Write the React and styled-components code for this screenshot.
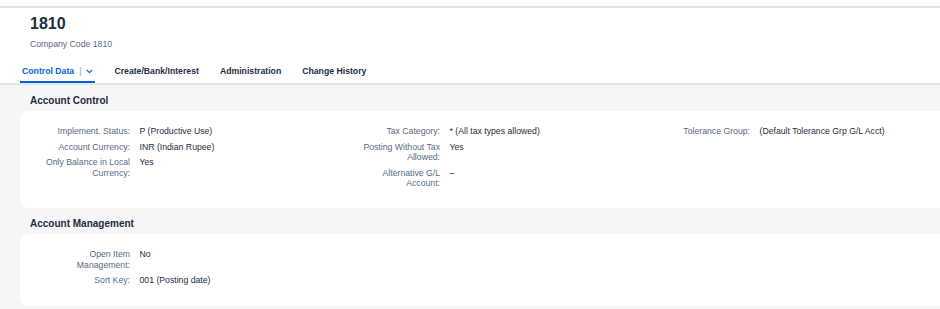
import React from 'react';
import styled, { createGlobalStyle } from 'styled-components';

const colors = {
  text: '#1d2d3e',
  label: '#556b82',
  blue: '#0064d9',
  bg: '#f5f6f7',
  line: '#e4e4e4',
};

const GlobalStyle = createGlobalStyle`
  html, body {
    margin: 0;
    padding: 0;
    background: ${colors.bg};
    overflow: hidden;
  }
  body {
    font-family: 'Liberation Sans', Arial, sans-serif;
    color: ${colors.text};
  }
`;

const Page = styled.div`
  width: 940px;
  height: 309px;
  overflow: hidden;
  background: ${colors.bg};
`;

const TopStrip = styled.div`
  height: 6px;
  background: #fff;
  border-bottom: 2px solid ${colors.line};
`;

const Header = styled.header`
  background: #fff;
  padding: 6px 0 0 30px;
  border-bottom: 2px solid ${colors.line};
`;

const Title = styled.h1`
  margin: 0;
  font-size: 16px;
  line-height: 20px;
  font-weight: 700;
`;

const Subtitle = styled.div`
  margin-top: 4px;
  font-size: 8.7px;
  line-height: 12px;
  color: ${colors.label};
`;

const Tabs = styled.nav`
  display: flex;
  gap: 17px;
  margin: 15px 0 0 -10px;
`;

const Tab = styled.div`
  display: flex;
  align-items: center;
  gap: 5px;
  padding: 0 2px 4px;
  height: 12px;
  font-size: 8.7px;
  line-height: 12px;
  font-weight: 700;
  color: ${(p) => (p.$active ? colors.blue : colors.text)};
  border-bottom: 2px solid ${(p) => (p.$active ? colors.blue : 'transparent')};
`;

const Sep = styled.span`
  font-weight: 400;
  color: #7fa9dd;
`;

const Section = styled.section`
  padding: 0 0 0 20px;
`;

const SectionTitle = styled.h2`
  margin: 0;
  padding: 10px 0 0 10px;
  height: 16px;
  font-size: 10px;
  line-height: 12px;
  font-weight: 700;
`;

const Card = styled.div`
  background: #fff;
  border-radius: 8px 0 0 8px;
  margin-right: -12px;
  padding: 15px 0 0 20px;
  height: ${(p) => p.$height}px;
  box-sizing: border-box;
  display: grid;
  grid-template-columns: repeat(3, 310px);
  align-items: start;
`;

const Column = styled.div`
  display: grid;
  grid-template-columns: 90px 1fr;
  column-gap: 9.5px;
  row-gap: 5px;
  font-size: 8.7px;
  line-height: 10.6px;
`;

const Label = styled.div`
  text-align: right;
  color: ${colors.label};
`;

const Value = styled.div`
  color: ${colors.text};
`;

const Chevron = () => (
  <svg width="7" height="5" viewBox="0 0 7 5" fill="none">
    <path d="M0.7 0.8 L3.5 3.7 L6.3 0.8" stroke={colors.blue} strokeWidth="1.1" />
  </svg>
);

const Field = ({ label, value }) => (
  <>
    <Label>{label}:</Label>
    <Value>{value}</Value>
  </>
);

const controlColumns = [
  [
    ['Implement. Status', 'P (Productive Use)'],
    ['Account Currency', 'INR (Indian Rupee)'],
    ['Only Balance in Local Currency', 'Yes'],
  ],
  [
    ['Tax Category', '* (All tax types allowed)'],
    ['Posting Without Tax Allowed', 'Yes'],
    ['Alternative G/L Account', '–'],
  ],
  [['Tolerance Group', '(Default Tolerance Grp G/L Acct)']],
];

const managementColumns = [
  [
    ['Open Item Management', 'No'],
    ['Sort Key', '001 (Posting date)'],
  ],
];

const FormCard = ({ columns, height }) => (
  <Card $height={height}>
    {columns.map((fields, i) => (
      <Column key={i}>
        {fields.map(([label, value]) => (
          <Field key={label} label={label} value={value} />
        ))}
      </Column>
    ))}
  </Card>
);

export default function App() {
  return (
    <Page>
      <GlobalStyle />
      <TopStrip />
      <Header>
        <Title>1810</Title>
        <Subtitle>Company Code 1810</Subtitle>
        <Tabs>
          <Tab $active>
            Control Data <Sep>|</Sep> <Chevron />
          </Tab>
          <Tab>Create/Bank/Interest</Tab>
          <Tab>Administration</Tab>
          <Tab>Change History</Tab>
        </Tabs>
      </Header>
      <Section>
        <SectionTitle>Account Control</SectionTitle>
        <FormCard columns={controlColumns} height={97} />
      </Section>
      <Section>
        <SectionTitle>Account Management</SectionTitle>
        <FormCard columns={managementColumns} height={72} />
      </Section>
    </Page>
  );
}
